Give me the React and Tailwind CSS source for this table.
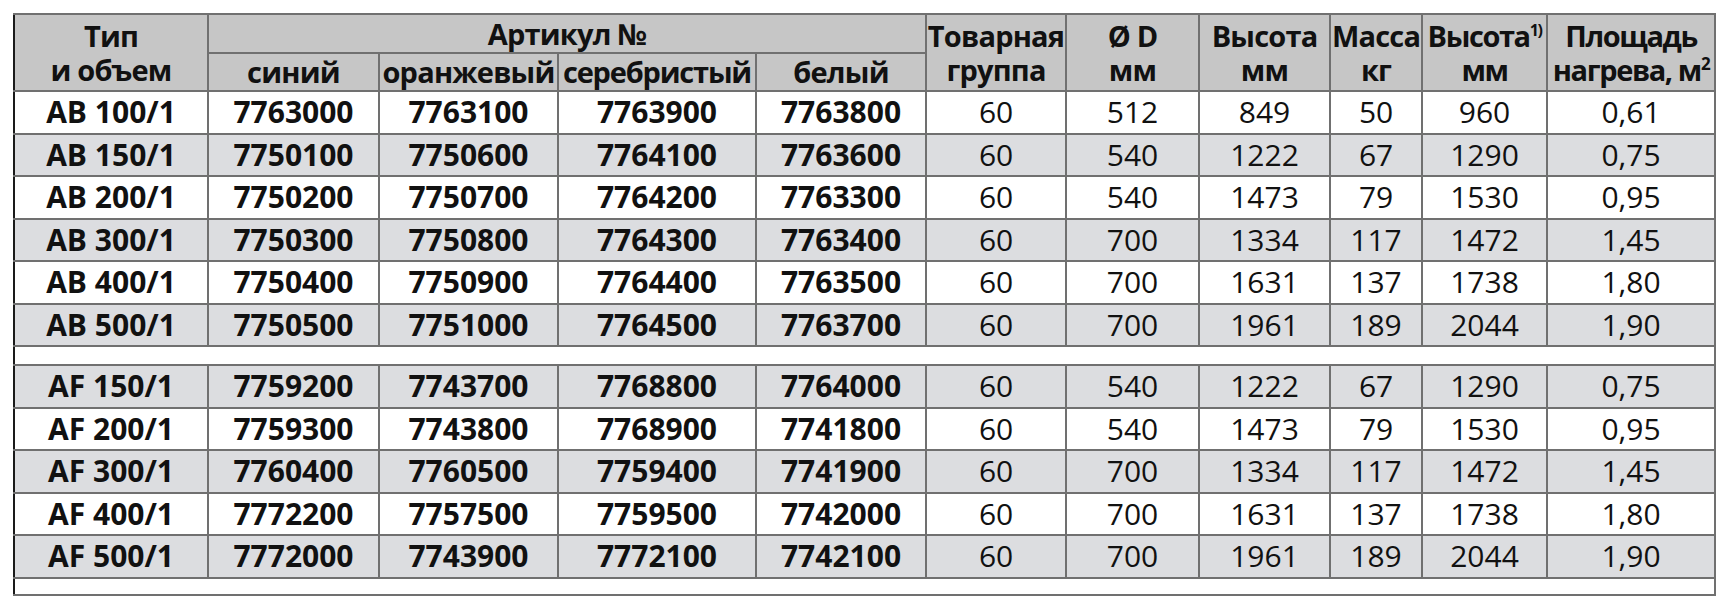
import React from "react";

const widths = ["w-[194px]", "w-[171px]", "w-[179px]", "w-[198px]", "w-[170px]", "w-[140px]", "w-[133px]", "w-[131px]", "w-[92px]", "w-[125px]", "w-[168px]"];

const groupAB = [
  ["AB 100/1", "7763000", "7763100", "7763900", "7763800", "60", "512", "849", "50", "960", "0,61"],
  ["AB 150/1", "7750100", "7750600", "7764100", "7763600", "60", "540", "1222", "67", "1290", "0,75"],
  ["AB 200/1", "7750200", "7750700", "7764200", "7763300", "60", "540", "1473", "79", "1530", "0,95"],
  ["AB 300/1", "7750300", "7750800", "7764300", "7763400", "60", "700", "1334", "117", "1472", "1,45"],
  ["AB 400/1", "7750400", "7750900", "7764400", "7763500", "60", "700", "1631", "137", "1738", "1,80"],
  ["AB 500/1", "7750500", "7751000", "7764500", "7763700", "60", "700", "1961", "189", "2044", "1,90"],
];

const groupAF = [
  ["AF 150/1", "7759200", "7743700", "7768800", "7764000", "60", "540", "1222", "67", "1290", "0,75"],
  ["AF 200/1", "7759300", "7743800", "7768900", "7741800", "60", "540", "1473", "79", "1530", "0,95"],
  ["AF 300/1", "7760400", "7760500", "7759400", "7741900", "60", "700", "1334", "117", "1472", "1,45"],
  ["AF 400/1", "7772200", "7757500", "7759500", "7742000", "60", "700", "1631", "137", "1738", "1,80"],
  ["AF 500/1", "7772000", "7743900", "7772100", "7742100", "60", "700", "1961", "189", "2044", "1,90"],
];

const cell = "border-2 border-[#707070] p-0 text-center align-middle whitespace-nowrap overflow-hidden";

function DataRow({ row, shaded }) {
  return (
    <tr className={`h-[42.5px] ${shaded ? "bg-[#dcdde0]" : "bg-white"}`}>
      {row.map((v, i) => (
        <td
          key={i}
          className={`${cell} ${i === 0 ? "border-l-[#1a1a1a]" : ""} ${i < 5 ? "font-bold" : "font-normal"} text-[30px] leading-none`}
        >
          {v}
        </td>
      ))}
    </tr>
  );
}

function Spacer({ h }) {
  return (
    <tr className={`${h} bg-white`}>
      <td colSpan={11} className={`${cell} border-l-[#1a1a1a]`}></td>
    </tr>
  );
}

export default function App() {
  const head = `${cell} font-bold text-[29px] tracking-[-0.8px] leading-[34px]`;
  return (
    <div className="pl-[13px] pt-[13px] bg-white min-h-[596px] text-[#111]" style={{ fontFamily: '"Open Sans", "Noto Sans", sans-serif' }}>
      <table className="table-fixed border-collapse w-[1701px]">
        <colgroup>
          {widths.map((w, i) => (
            <col key={i} className={w} />
          ))}
        </colgroup>
        <thead className="bg-[#c6c6c6]">
          <tr className="h-[39px]">
            <th rowSpan={2} className={`${head} border-l-[#1a1a1a]`}>
              Тип<br />и объем
            </th>
            <th colSpan={4} className={head}>Артикул №</th>
            <th rowSpan={2} className={head}>Товарная<br />группа</th>
            <th rowSpan={2} className={head}>Ø D<br />мм</th>
            <th rowSpan={2} className={head}>Высота<br />мм</th>
            <th rowSpan={2} className={head}>Масса<br />кг</th>
            <th rowSpan={2} className={`${head} tracking-[-1.4px]`}>
              Высота<span className="relative -top-[11px] text-[16px] leading-none">1)</span><br />мм
            </th>
            <th rowSpan={2} className={`${head} tracking-[-1.4px]`}>
              Площадь<br />нагрева, м<span className="relative -top-[11px] text-[17px] leading-none">2</span>
            </th>
          </tr>
          <tr className="h-[38px]">
            <th className={head}>синий</th>
            <th className={head}>оранжевый</th>
            <th className={`${head} tracking-[-1.2px]`}>серебристый</th>
            <th className={head}>белый</th>
          </tr>
        </thead>
        <tbody>
          {groupAB.map((r, i) => (
            <DataRow key={r[0]} row={r} shaded={i % 2 === 1} />
          ))}
          <Spacer h="h-[19px]" />
          {groupAF.map((r, i) => (
            <DataRow key={r[0]} row={r} shaded={i % 2 === 0} />
          ))}
          <Spacer h="h-[17px]" />
        </tbody>
      </table>
    </div>
  );
}
